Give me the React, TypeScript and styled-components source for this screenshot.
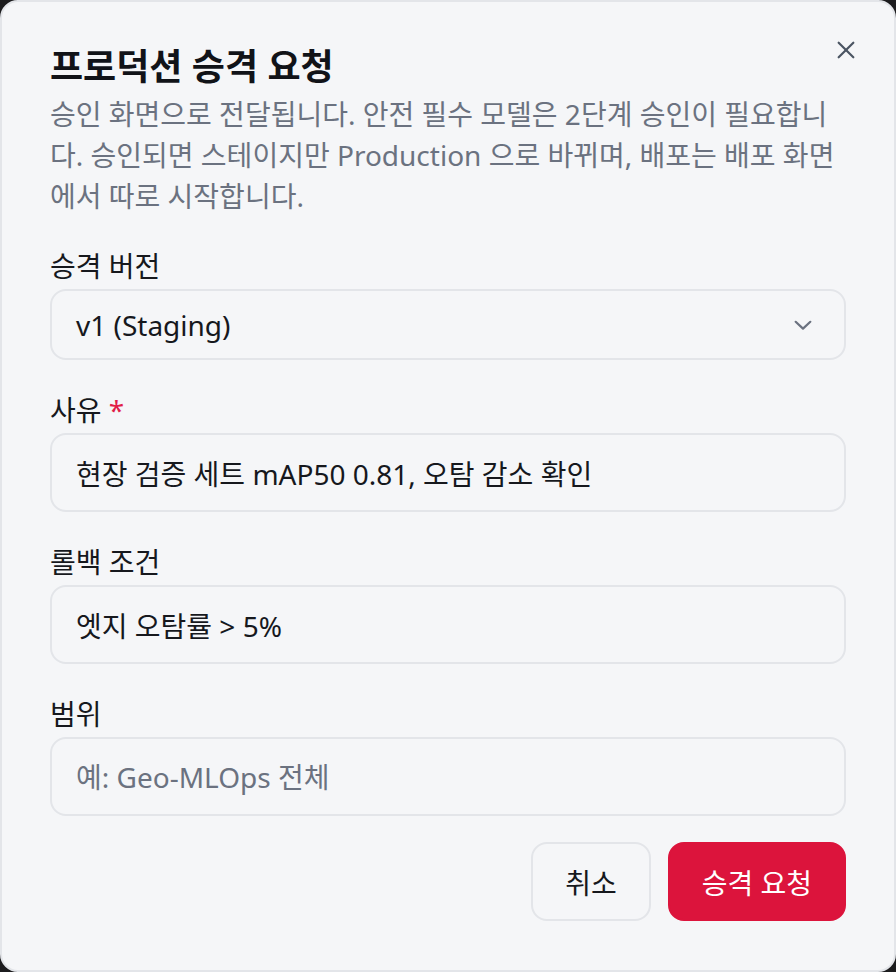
import styled, { createGlobalStyle } from "styled-components";

const GlobalStyle = createGlobalStyle`
  * {
    box-sizing: border-box;
  }
  html,
  body {
    margin: 0;
    padding: 0;
    background: #1c1c1e;
  }
  body {
    font-family: "Noto Sans", "Noto Sans CJK KR", sans-serif;
  }
`;

function CloseIcon() {
  return (
    <svg width="22" height="22" viewBox="0 0 24 24" fill="none" stroke="currentColor" strokeWidth="2.4" strokeLinecap="round">
      <path d="M4 4L20 20" />
      <path d="M20 4L4 20" />
    </svg>
  );
}

function ChevronIcon() {
  return (
    <svg width="22" height="22" viewBox="0 0 24 24" fill="none" stroke="currentColor" strokeWidth="2.4" strokeLinecap="round" strokeLinejoin="round">
      <path d="M4 8.5L12 16L20 8.5" />
    </svg>
  );
}

export default function App() {
  return (
    <>
      <GlobalStyle />
      <Dialog>
        <CloseButton aria-label="닫기">
          <CloseIcon />
        </CloseButton>
        <Header>
          <Title>프로덕션 승격 요청</Title>
          <Description>
            승인 화면으로 전달됩니다. 안전 필수 모델은 2단계 승인이 필요합니다. 승인되면 스테이지만 Production 으로
            바뀌며, 배포는 배포 화면에서 따로 시작합니다.
          </Description>
        </Header>

        <Form>
          <Field>
            <Label>승격 버전</Label>
            <SelectTrigger type="button">
              <span>v1 (Staging)</span>
              <ChevronWrap>
                <ChevronIcon />
              </ChevronWrap>
            </SelectTrigger>
          </Field>

          <Field>
            <Label>
              사유 <Required>*</Required>
            </Label>
            <Input defaultValue="현장 검증 세트 mAP50 0.81, 오탐 감소 확인" />
          </Field>

          <Field>
            <Label>롤백 조건</Label>
            <Input defaultValue="엣지 오탐률 > 5%" />
          </Field>

          <Field>
            <Label>범위</Label>
            <Input placeholder="예: Geo-MLOps 전체" />
          </Field>
        </Form>

        <Footer>
          <Button type="button" $variant="outline">
            취소
          </Button>
          <Button type="button" $variant="primary">
            승격 요청
          </Button>
        </Footer>
      </Dialog>
    </>
  );
}

const Dialog = styled.div`
  position: relative;
  width: 100vw;
  height: 100vh;
  padding: 43px 48px 0;
  background: #f5f6f8;
  border: 2px solid #e3e5e9;
  border-radius: 18px;
  display: flex;
  flex-direction: column;
`;

const CloseButton = styled.button`
  position: absolute;
  top: 33px;
  right: 33px;
  width: 30px;
  height: 30px;
  padding: 0;
  border: none;
  background: transparent;
  color: #4b5563;
  display: flex;
  align-items: center;
  justify-content: center;
  cursor: pointer;
`;

const Header = styled.div`
  display: flex;
  flex-direction: column;
  gap: 5px;
`;

const Title = styled.h2`
  margin: 0;
  font-size: 36px;
  line-height: 44px;
  font-weight: 700;
  color: #111318;
`;

const Description = styled.p`
  margin: 0;
  font-size: 28px;
  line-height: 41px;
  color: #6b7280;
`;

const Form = styled.div`
  margin-top: 31px;
  display: flex;
  flex-direction: column;
  gap: 32px;
`;

const Field = styled.div`
  display: flex;
  flex-direction: column;
  gap: 5px;
`;

const Label = styled.label`
  font-size: 28px;
  line-height: 36px;
  color: #16181d;
`;

const Required = styled.span`
  color: #e11d48;
`;

const SelectTrigger = styled.button`
  height: 71px;
  padding: 0 30px 0 24px;
  border: 2px solid #e3e5e9;
  border-radius: 16px;
  background: #f5f6f8;
  display: flex;
  align-items: center;
  justify-content: space-between;
  font-family: inherit;
  font-size: 28px;
  color: #16181d;
  text-align: left;
  cursor: pointer;
`;

const ChevronWrap = styled.span`
  display: flex;
  color: #6b7280;
`;

const Input = styled.input`
  height: 79px;
  padding: 0 24px;
  border: 2px solid #e3e5e9;
  border-radius: 16px;
  background: #f5f6f8;
  font-family: inherit;
  font-size: 28px;
  color: #16181d;
  outline: none;

  &::placeholder {
    color: #6b7280;
  }
`;

const Footer = styled.div`
  margin-top: 26px;
  display: flex;
  justify-content: flex-end;
  gap: 17px;
`;

const Button = styled.button<{ $variant: "outline" | "primary" }>`
  height: 79px;
  padding: 0 32px;
  border-radius: 16px;
  border: 2px solid ${({ $variant }) => ($variant === "primary" ? "#dc143c" : "#e3e5e9")};
  background: ${({ $variant }) => ($variant === "primary" ? "#dc143c" : "#f5f6f8")};
  color: ${({ $variant }) => ($variant === "primary" ? "#ffffff" : "#16181d")};
  font-family: inherit;
  font-size: 28px;
  cursor: pointer;
`;
